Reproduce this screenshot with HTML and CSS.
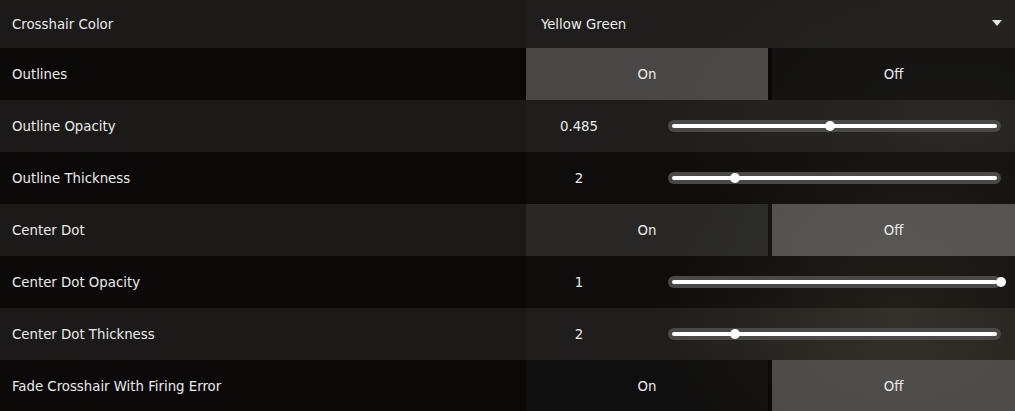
FILE: index.html
```html
<!DOCTYPE html>
<html>
<head>
<meta charset="utf-8">
<link rel="stylesheet" href="styles.css">
</head>
<body>
<div class="list">
  <div class="row light first">
    <div class="label">Crosshair Color</div>
    <div class="control dropdown">
      <span class="dd-value">Yellow Green</span>
      <span class="dd-arrow"></span>
    </div>
  </div>
  <div class="row dark">
    <div class="label">Outlines</div>
    <div class="control toggle">
      <div class="opt active">On</div>
      <div class="opt">Off</div>
    </div>
  </div>
  <div class="row light">
    <div class="label">Outline Opacity</div>
    <div class="control slider">
      <span class="value">0.485</span>
      <div class="track"><div class="fill"></div><div class="thumb" style="left:48.5%"></div></div>
    </div>
  </div>
  <div class="row dark">
    <div class="label">Outline Thickness</div>
    <div class="control slider">
      <span class="value">2</span>
      <div class="track"><div class="fill"></div><div class="thumb" style="left:20%"></div></div>
    </div>
  </div>
  <div class="row light">
    <div class="label">Center Dot</div>
    <div class="control toggle">
      <div class="opt">On</div>
      <div class="opt active">Off</div>
    </div>
  </div>
  <div class="row dark">
    <div class="label">Center Dot Opacity</div>
    <div class="control slider">
      <span class="value">1</span>
      <div class="track"><div class="fill"></div><div class="thumb" style="left:100%"></div></div>
    </div>
  </div>
  <div class="row light">
    <div class="label">Center Dot Thickness</div>
    <div class="control slider">
      <span class="value">2</span>
      <div class="track"><div class="fill"></div><div class="thumb" style="left:20%"></div></div>
    </div>
  </div>
  <div class="row dark">
    <div class="label">Fade Crosshair With Firing Error</div>
    <div class="control toggle">
      <div class="opt">On</div>
      <div class="opt active">Off</div>
    </div>
  </div>
</div>
</body>
</html>
```

FILE: styles.css
```css
html, body {
  margin: 0;
  padding: 0;
}
body {
  width: 1015px;
  height: 411px;
  overflow: hidden;
  font-family: "DejaVu Sans Condensed", "DejaVu Sans", sans-serif;
  font-size: 14.8px;
  color: #ebebeb;
  background:
    radial-gradient(ellipse 240px 170px at 900px 320px, rgba(120, 100, 80, 0.22), rgba(120, 100, 80, 0) 100%),
    radial-gradient(ellipse 300px 180px at 950px 120px, rgba(90, 80, 70, 0.16), rgba(90, 80, 70, 0) 100%),
    #0c0b0a;
}
.list {
  display: flex;
  flex-direction: column;
}
.row {
  display: flex;
  height: 52px;
}
.row.first {
  height: 48px;
}
.row.light {
  background: rgba(255, 250, 245, 0.063);
}
.row.dark {
  background: rgba(0, 0, 0, 0.1);
}
.label {
  width: 526px;
  flex: none;
  display: flex;
  align-items: center;
  padding-left: 12px;
  box-sizing: border-box;
  padding-bottom: 1px;
}
.control {
  flex: 1;
  display: flex;
  align-items: center;
  background: rgba(255, 255, 255, 0.018);
}
.dropdown {
  justify-content: space-between;
  padding: 0 13px 1px 15px;
}
.dd-arrow {
  width: 0;
  height: 0;
  border-left: 5px solid transparent;
  border-right: 5px solid transparent;
  border-top: 6px solid #e6e6e6;
  margin-bottom: 2px;
}
.toggle {
  display: grid;
  grid-template-columns: 242px 1fr;
  column-gap: 4px;
  align-items: stretch;
  background: rgba(0, 0, 0, 0.35);
}
.opt {
  display: flex;
  align-items: center;
  justify-content: center;
  padding-bottom: 1px;
  background: rgba(255, 255, 255, 0.045);
}
.row.light .opt {
  background: rgba(255, 255, 255, 0.1);
}
.opt.active,
.row.light .opt.active {
  background: rgba(255, 250, 245, 0.27);
}
.slider {
  padding-right: 14px;
}
.value {
  width: 106px;
  text-align: center;
  flex: none;
  padding-bottom: 1px;
}
.track {
  position: relative;
  margin-left: 36px;
  flex: 1;
  height: 12px;
  border-radius: 6px;
  background: #4a4948;
  display: flex;
  align-items: center;
  padding: 0 4px;
}
.fill {
  flex: 1;
  height: 4px;
  border-radius: 2px;
  background: #ffffff;
}
.thumb {
  position: absolute;
  top: 1px;
  width: 10px;
  height: 10px;
  margin-left: -5px;
  border-radius: 50%;
  background: #ffffff;
}
```
